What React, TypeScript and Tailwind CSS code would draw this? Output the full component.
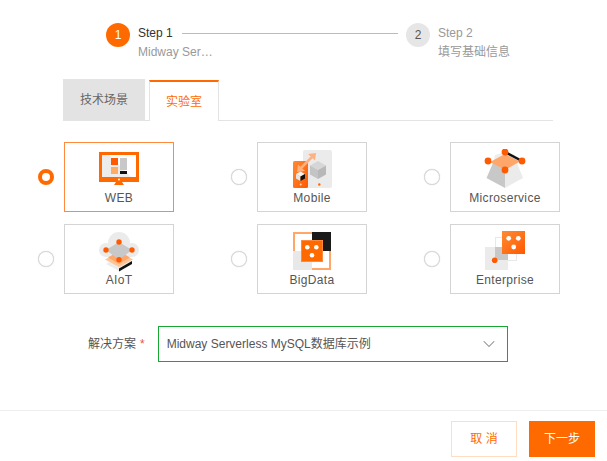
import { ReactNode } from 'react';
import { ChevronDown } from 'lucide-react';

const ORANGE = '#ff6a00';

function WebIcon() {
    return (
        <svg width="60" height="42" viewBox="0 0 60 42">
            <rect x="10" y="3" width="40" height="30" fill={ORANGE} />
            <rect x="13" y="6" width="34" height="22" fill="#fff" />
            <polygon points="13,6 20,6 42,28 13,28" fill="#ececec" />
            <rect x="22" y="9" width="7" height="7" fill="#ff5a00" />
            <rect x="22" y="18" width="7" height="7" fill="#ffac66" />
            <rect x="31" y="9" width="7" height="12" fill="#c8c8c8" />
            <rect x="31" y="22" width="7" height="3" fill="#111" />
            <circle cx="30" cy="30.5" r="1" fill="#fff" />
            <polygon points="27,33 33,33 35,36 25,36" fill={ORANGE} />
        </svg>
    );
}

function MobileIcon() {
    return (
        <svg width="60" height="42" viewBox="0 0 60 42">
            <defs>
                <linearGradient id="mob" x1="0" y1="0" x2="1" y2="1">
                    <stop offset="0" stopColor="#ff8a33" />
                    <stop offset="1" stopColor="#ff5a00" />
                </linearGradient>
            </defs>
            <rect x="21" y="1" width="29" height="38" rx="2" fill="#ebebeb" />
            <rect x="11" y="12" width="15" height="27" rx="1.5" fill="url(#mob)" />
            <polygon points="36,12 44,16.5 36,21 28,16.5" fill="#d6d6d6" />
            <polygon points="28,16.5 36,21 36,30 28,25.5" fill="#c4c4c4" />
            <polygon points="44,16.5 36,21 36,30 44,25.5" fill="#b8b8b8" />
            <polygon points="18.5,22.5 23,25 18.5,27.5 14,25" fill="#f4f4f4" />
            <polygon points="14,25 18.5,27.5 18.5,32 14,29.5" fill="#e4e4e4" />
            <polygon points="23,25 18.5,27.5 18.5,32 23,29.5" fill="#111" />
            <line x1="19" y1="19" x2="30" y2="8" stroke="#ffb27f" strokeWidth="2.5" />
            <polygon points="15,23 16,15.5 23,22" fill="#ffb27f" />
            <polygon points="34,4 33,11.5 26,5" fill="#ffb27f" />
            <circle cx="18.7" cy="35.5" r="1" fill="#ffd2b0" />
            <circle cx="37.3" cy="35.5" r="1.2" fill={ORANGE} />
        </svg>
    );
}

function MicroserviceIcon() {
    return (
        <svg width="60" height="42" viewBox="0 0 60 42">
            <polygon points="20,6 30,3 40,6 42,14 30,21 18,14" fill="#ededed" />
            <polygon points="18,14 30,21 30,39 11.5,29" fill="#c8c8c8" />
            <polygon points="42,14 30,21 30,39 48,29" fill="#ebebeb" />
            <polygon points="30,5 45,12.5 30,21 15,13" fill="#ffa76b" />
            <line x1="30" y1="3" x2="47" y2="12" stroke="#111" strokeWidth="2.5" />
            <circle cx="30" cy="3" r="3.4" fill="#ff5a00" />
            <circle cx="13" cy="12" r="3.4" fill="#ff5a00" />
            <circle cx="47" cy="12" r="3.4" fill="#ff5a00" />
            <circle cx="30" cy="21" r="3.4" fill="#ff5a00" />
        </svg>
    );
}

function AiotIcon() {
    return (
        <svg width="60" height="42" viewBox="0 0 60 42">
            <circle cx="30" cy="12" r="11" fill="#ebebeb" />
            <circle cx="17" cy="19" r="7" fill="#ebebeb" />
            <circle cx="43" cy="19" r="7" fill="#ebebeb" />
            <rect x="17" y="14" width="26" height="12" fill="#ebebeb" />
            <polygon points="30,40 17,33 30,26 43,31" fill="#ececec" />
            <polygon points="30,37.5 43,30 43,33 30,40.5" fill="#111" />
            <polygon points="30,36 16,28.5 30,21 44,28.5" fill="#ffc596" />
            <polygon points="30,33 19,26.5 30,20 41,26.5" fill="#ffa76b" />
            <polygon points="30,11 43,19 30,28.7 17,19" fill="#c8c8c8" />
            <circle cx="30" cy="11" r="2.7" fill="#ff5a00" />
            <circle cx="17" cy="19" r="2.7" fill="#ff5a00" />
            <circle cx="43" cy="19" r="2.7" fill="#ff5a00" />
            <circle cx="30" cy="28.7" r="2.7" fill="#ff5a00" />
        </svg>
    );
}

function BigDataIcon() {
    return (
        <svg width="60" height="42" viewBox="0 0 60 42">
            <rect x="12" y="2" width="36" height="36" fill="#fff" stroke="#ffa76b" strokeWidth="2" />
            <rect x="30" y="1" width="19" height="19" fill="#1a1a1a" />
            <rect x="11" y="20" width="19" height="19" fill="#e8e8e8" />
            <rect x="19" y="9" width="22" height="22" fill={ORANGE} />
            <rect x="19.5" y="9.5" width="21" height="21" fill="none" stroke="#ff8a3d" />
            <circle cx="25.3" cy="16.3" r="2.3" fill="#fff" />
            <circle cx="34.3" cy="16.3" r="2.3" fill="#fff" />
            <circle cx="30" cy="24.3" r="2.3" fill="#fff" />
        </svg>
    );
}

function EnterpriseIcon() {
    return (
        <svg width="60" height="42" viewBox="0 0 60 42">
            <defs>
                <linearGradient id="ent" x1="0" y1="0" x2="1" y2="1">
                    <stop offset="0" stopColor="#ff8a33" />
                    <stop offset="1" stopColor="#ff5a00" />
                </linearGradient>
            </defs>
            <rect x="20.5" y="6.5" width="21" height="23" fill="#fff" stroke="#e8e8e8" />
            <rect x="10" y="16" width="23" height="23" fill="#ebebeb" />
            <rect x="20" y="16" width="13" height="13" fill="#c8c8c8" />
            <rect x="27" y="0" width="23" height="23" fill="url(#ent)" />
            <circle cx="33.7" cy="7.3" r="2.4" fill="#fff" />
            <circle cx="43.3" cy="7.3" r="2.4" fill="#fff" />
            <circle cx="38.7" cy="16" r="2.4" fill="#fff" />
            <circle cx="19.7" cy="29.3" r="2.8" fill="#ff5a00" />
        </svg>
    );
}

const OPTIONS: { label: string; icon: ReactNode; checked?: boolean }[] = [
    { label: 'WEB', icon: <WebIcon />, checked: true },
    { label: 'Mobile', icon: <MobileIcon /> },
    { label: 'Microservice', icon: <MicroserviceIcon /> },
    { label: 'AIoT', icon: <AiotIcon /> },
    { label: 'BigData', icon: <BigDataIcon /> },
    { label: 'Enterprise', icon: <EnterpriseIcon /> },
];

export default function App() {
    return (
        <div className="w-[607px] h-[461px] bg-white overflow-hidden flex flex-col text-xs text-[#333] font-['Liberation_Sans','Noto_Sans_CJK_SC',sans-serif]">
            {/* Steps */}
            <div className="flex pl-[106px] pt-[23px] h-[80px]">
                <div className="flex w-[300px]">
                    <div className="w-6 h-6 rounded-full bg-[#ff6a00] text-white flex items-center justify-center">1</div>
                    <div className="ml-2 flex-1">
                        <div className="flex items-center h-5">
                            <span className="text-[#333]">Step 1</span>
                            <div className="ml-[9px] mr-2 flex-1 h-px bg-[#bbb]" />
                        </div>
                        <div className="mt-[-1px] h-5 leading-5 text-[#999]">Midway Ser…</div>
                    </div>
                </div>
                <div className="flex">
                    <div className="w-6 h-6 rounded-full bg-[#e6e6e6] text-[#555] flex items-center justify-center">2</div>
                    <div className="ml-2">
                        <div className="h-5 leading-5 text-[#999]">Step 2</div>
                        <div className="mt-[-1px] h-5 leading-5 text-[#999]">填写基础信息</div>
                    </div>
                </div>
            </div>

            {/* Tabs */}
            <div className="ml-[63px] w-[490px] h-[41px] flex items-end border-b border-[#e3e3e3]">
                <div className="w-[82px] h-[41px] bg-[#e3e3e3] text-[#666] flex items-center justify-center">技术场景</div>
                <div className="ml-1 w-[70px] h-[41px] -mb-px bg-white border-t-2 border-t-[#ff6a00] border-r border-r-[#e3e3e3] border-l border-l-[#e3e3e3] text-[#ff6a00] flex items-center justify-center">实验室</div>
            </div>

            {/* Options */}
            <div className="mt-[21px] pl-[38px] grid grid-cols-[repeat(3,193px)] gap-y-3">
                {OPTIONS.map((opt) => (
                    <div key={opt.label} className="flex items-center">
                        {opt.checked ? (
                            <div className="w-4 h-4 rounded-full border-[4px] border-[#ff6a00] bg-white" />
                        ) : (
                            <div className="w-4 h-4 rounded-full border border-[#d8d8d8] bg-white shadow-[0_0_1px_#ccc]" />
                        )}
                        <div
                            className={`ml-[10px] w-[110px] h-[70px] border flex flex-col items-center ${
                                opt.checked ? 'border-[#ff8a3d]' : 'border-[#d4d4d4]'
                            }`}
                        >
                            <div className="mt-[6px] h-[42px]">{opt.icon}</div>
                            <div className="mt-[-1px] text-xs leading-[16px] tracking-[0.35px] text-[#555]">{opt.label}</div>
                        </div>
                    </div>
                ))}
            </div>

            {/* Solution select */}
            <div className="mt-8 flex items-center pl-[88px]">
                <span className="text-[#555]">解决方案</span>
                <span className="ml-[4px] text-[#f05050]">*</span>
                <div className="ml-[13px] w-[350px] h-9 border border-[#16a832] flex items-center justify-between pl-2 pr-2">
                    <span className="text-[#555]">Midway Serverless MySQL数据库示例</span>
                    <ChevronDown className="w-5 h-5 text-[#888]" strokeWidth={1.25} />
                </div>
            </div>

            {/* Footer */}
            <div className="mt-auto h-[51px] border-t border-[#eee] flex justify-end gap-3 pt-[10px] pr-3">
                <button className="w-[66px] h-9 border border-[#ffdcc2] bg-white text-[#ff6a00] text-xs">取 消</button>
                <button className="w-[66px] h-9 bg-[#ff6a00] text-white text-xs">下一步</button>
            </div>
        </div>
    );
}
